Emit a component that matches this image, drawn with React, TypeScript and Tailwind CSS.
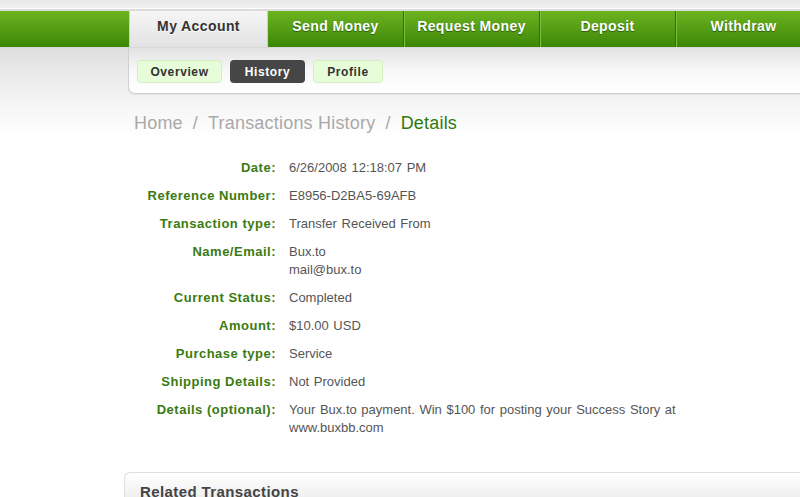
const tabs = [
  { label: "Send Money", w: "w-[135px]" },
  { label: "Request Money", w: "w-[136px]" },
  { label: "Deposit", w: "w-[136px]" },
  { label: "Withdraw", w: "w-[136px]" },
];

const rows: { label: string; value: string[] }[] = [
  { label: "Date", value: ["6/26/2008 12:18:07 PM"] },
  { label: "Reference Number", value: ["E8956-D2BA5-69AFB"] },
  { label: "Transaction type", value: ["Transfer Received From"] },
  { label: "Name/Email", value: ["Bux.to", "mail@bux.to"] },
  { label: "Current Status", value: ["Completed"] },
  { label: "Amount", value: ["$10.00 USD"] },
  { label: "Purchase type", value: ["Service"] },
  { label: "Shipping Details", value: ["Not Provided"] },
  {
    label: "Details (optional)",
    value: ["Your Bux.to payment. Win $100 for posting your Success Story at www.buxbb.com"],
  },
];

export default function App() {
  return (
    <div className="h-[497px] w-[800px] overflow-hidden bg-white font-['Liberation_Sans',Arial,sans-serif]">
      {/* top strip */}
      <div className="h-[8px] bg-gradient-to-b from-[#e9e9e9] to-[#efefef]" />
      <div className="h-[1px] bg-white" />
      <div className="h-[2px] bg-[#dcdcdc]" />

      {/* main nav */}
      <nav className="flex h-[37px] border-b border-[#d8d8d8] bg-gradient-to-b from-[#6cb41f] to-[#3c8709]">
        <div className="w-[129px] shrink-0" />
        <div className="flex w-[139px] shrink-0 items-center justify-center border-x border-[#cfcfcf] bg-gradient-to-b from-[#f6f6f6] to-[#e2e2e2] pb-[5px] text-[14px] font-bold tracking-[0.4px] text-[#333] [text-shadow:0_1px_0_#fff]">
          My Account
        </div>
        {tabs.map((t, i) => (
          <div
            key={t.label}
            className={`flex ${t.w} shrink-0 items-center justify-center pb-[5px] text-[14px] font-bold tracking-[0.4px] text-white [text-shadow:0_1px_1px_#2a5a08] ${
              i === 0 ? "" : "border-l border-[#2f6c0b] shadow-[inset_1px_0_0_#7fc24a]"
            }`}
          >
            {t.label}
          </div>
        ))}
      </nav>

      {/* page body */}
      <div className="bg-[linear-gradient(to_bottom,#dfdfdf_0px,#f3f3f3_50px,#ffffff_88px)]">
        <div className="flex">
          <div className="w-[128px] shrink-0" />
          <div className="flex h-[46px] flex-1 items-start gap-[8px] rounded-bl-[7px] border-b border-l border-[#cfcfcf] bg-gradient-to-b from-[#e2e2e2] via-[#f8f8f8] to-white pl-[8px] pt-[12px] shadow-[0_1px_1px_#e4e4e4]">
            <span className="flex h-[23px] w-[85px] items-center justify-center rounded-[4px] border border-[#d4efbf] bg-[#e7fcd8] text-[12px] font-bold tracking-[0.6px] text-[#333]">
              Overview
            </span>
            <span className="flex h-[23px] w-[75px] items-center justify-center rounded-[4px] bg-[#464646] text-[12px] font-bold tracking-[0.6px] text-white">
              History
            </span>
            <span className="flex h-[23px] w-[70px] items-center justify-center rounded-[4px] border border-[#d4efbf] bg-[#e7fcd8] text-[12px] font-bold tracking-[0.6px] text-[#333]">
              Profile
            </span>
          </div>
        </div>

        {/* breadcrumb */}
        <div className="mt-[17px] pl-[134px] text-[18px] leading-[24px] tracking-[0.2px] text-[#a9a9a9]">
          Home<span className="mx-[10px]">/</span>Transactions History<span className="mx-[10px]">/</span>
          <span className="text-[#2f7a10]">Details</span>
        </div>
      </div>

      {/* details */}
      <div className="mt-[24px] flex flex-col gap-[10px]">
        {rows.map((r) => (
          <div key={r.label} className="flex text-[13px] leading-[18px]">
            <div className="w-[277px] shrink-0 pr-[1px] text-right font-bold tracking-[0.5px] text-[#3b7a12]">
              {r.label}:
            </div>
            <div className="ml-[12px] w-[420px] text-[#555] [word-spacing:1px]">
              {r.value.map((v) => (
                <div key={v}>{v}</div>
              ))}
            </div>
          </div>
        ))}
      </div>

      {/* related */}
      <div className="ml-[124px] mt-[35px] rounded-tl-[6px] border-l border-t border-[#dedede] bg-gradient-to-b from-white to-[#ececec] px-[15px] pt-[9px]">
        <h2 className="text-[15px] font-bold leading-[20px] tracking-[0.4px] text-[#444]">Related Transactions</h2>
      </div>
    </div>
  );
}
